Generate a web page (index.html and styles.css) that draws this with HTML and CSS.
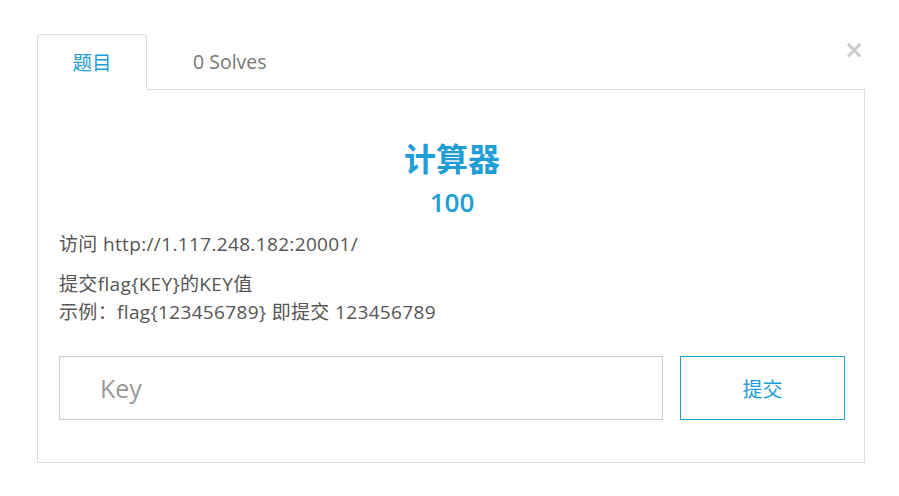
FILE: index.html
```html
<!DOCTYPE html>
<html lang="zh-CN">
<head>
    <meta charset="UTF-8">
    <title>计算器</title>
    <link rel="stylesheet" href="styles.css">
</head>
<body>
    <div class="modal">
        <button class="close-btn" aria-label="close">&times;</button>
        <ul class="tabs">
            <li class="tab active">题目</li>
            <li class="tab">0 Solves</li>
        </ul>
        <div class="panel">
            <h2 class="chal-name">计算器</h2>
            <div class="chal-value">100</div>
            <div class="chal-desc">
                <p>访问 http://1.117.248.182:20001/</p>
                <p>提交flag{KEY}的KEY值<br>示例：flag{123456789} 即提交 123456789</p>
            </div>
            <form class="submit-row" onsubmit="return false">
                <input class="key-input" type="text" placeholder="Key">
                <button class="submit-btn" type="submit">提交</button>
            </form>
        </div>
    </div>
</body>
</html>
```

FILE: styles.css
```css
* {
    margin: 0;
    padding: 0;
    box-sizing: border-box;
}

body {
    font-family: 'Open Sans', 'Noto Sans CJK SC', sans-serif;
    background: #ffffff;
    color: #555555;
    padding: 34px 35px 0 37px;
}

.modal {
    position: relative;
    width: 828px;
}

.close-btn {
    position: absolute;
    top: 4px;
    right: 1px;
    border: none;
    background: none;
    font-family: 'DejaVu Sans', sans-serif;
    font-size: 24px;
    line-height: 24px;
    font-weight: 700;
    color: #cccccc;
    cursor: pointer;
}

.tabs {
    display: flex;
    list-style: none;
    height: 56px;
}

.tab {
    font-size: 19.5px;
    color: #777777;
    line-height: 56px;
    padding: 0 0 0 46px;
}

.tab.active {
    width: 110px;
    padding: 0;
    font-size: 19.5px;
    text-align: center;
    color: #1e9dd6;
    border: 1px solid #dddddd;
    border-bottom: 1px solid #ffffff;
    border-radius: 4px 4px 0 0;
    background: #ffffff;
    position: relative;
    z-index: 2;
}

.panel {
    border: 1px solid #dddddd;
    margin-top: -1px;
    padding: 47px 19px 42px 21px;
}

.chal-name {
    text-align: center;
    font-size: 32px;
    font-weight: 700;
    color: #1e9dd6;
    line-height: 44px;
}

.chal-value {
    text-align: center;
    font-size: 26px;
    font-weight: 600;
    color: #1e9dd6;
    line-height: 36px;
    margin: 3px 0 10px;
}

.chal-desc {
    font-size: 19px;
    line-height: 28px;
    letter-spacing: 0.35px;
}

.chal-desc p {
    margin-bottom: 12px;
}

.submit-row {
    display: flex;
    gap: 17px;
    margin-top: 30px;
}

.key-input {
    flex: 1;
    height: 64px;
    border: 1px solid #cccccc;
    padding: 0 40px;
    font-family: 'Open Sans', 'Noto Sans CJK SC', sans-serif;
    font-size: 25px;
    color: #555555;
    outline: none;
}

.key-input::placeholder {
    color: #999999;
}

.submit-btn {
    width: 165px;
    height: 64px;
    border: 1px solid #1e9dd6;
    background: #ffffff;
    color: #1e9dd6;
    font-family: 'Open Sans', 'Noto Sans CJK SC', sans-serif;
    font-size: 20px;
    cursor: pointer;
}
```
